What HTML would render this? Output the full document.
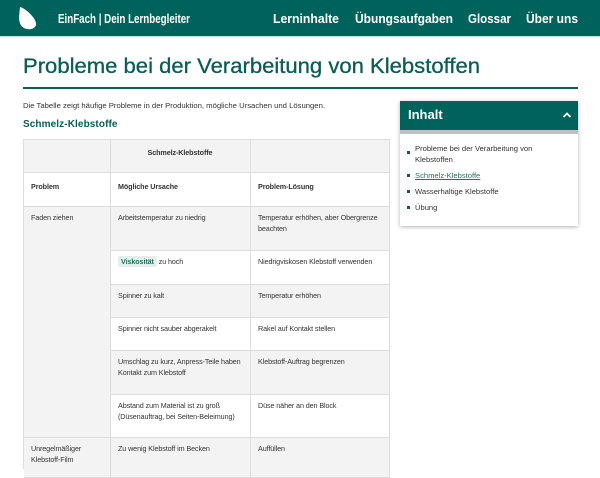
<!DOCTYPE html>
<html><head><meta charset="utf-8"><style>
*{margin:0;padding:0;box-sizing:border-box}
body{width:600px;height:467px;overflow:hidden;background:#fff;font-family:"Liberation Sans",sans-serif;color:#333;position:relative}
.a{position:absolute}
.hdr{left:0;top:0;width:600px;height:37px;background:#00635b;border-bottom:1px solid #bfe5e0}
.c{position:absolute;font-size:7.2px;letter-spacing:-0.1px;line-height:11px;padding:5px 8px 5px 7px;border-right:1px solid #ddd;border-bottom:1px solid #ddd}
.g{background:#f3f3f3}.w{background:#fff}
b{font-weight:bold}
.toc{font-size:7.6px;line-height:11px;color:#333}
</style></head><body>
<div class="a hdr"></div>
<svg class="a" style="left:17px;top:5px" width="22" height="26" viewBox="0 0 22 26"><path d="M3 2 C8 3 18 12 19 18 C20 23 14 25 10 24 C4 23 2 18 2 12 Z" fill="#fff"/></svg>
<svg class="a" style="left:0;top:0" width="600" height="90">
<g fill="#fff" font-family="Liberation Sans" font-weight="bold" font-size="13">
<text x="58" y="23" textLength="132" lengthAdjust="spacingAndGlyphs">EinFach | Dein Lernbegleiter</text>
<text x="273" y="23" textLength="66" lengthAdjust="spacingAndGlyphs">Lerninhalte</text>
<text x="355" y="23" textLength="98" lengthAdjust="spacingAndGlyphs">Übungsaufgaben</text>
<text x="468" y="23" textLength="43" lengthAdjust="spacingAndGlyphs">Glossar</text>
<text x="526" y="23" textLength="52" lengthAdjust="spacingAndGlyphs">Über uns</text>
</g>
<text x="23" y="73" fill="#0b5c55" font-family="Liberation Sans" font-size="21" stroke="#0b5c55" stroke-width="0.3" textLength="457" lengthAdjust="spacingAndGlyphs">Probleme bei der Verarbeitung von Klebstoffen</text>
</svg>
<div class="a" style="left:23px;top:87px;width:555px;height:2px;background:#0b5c55"></div>
<div class="a" style="left:23px;top:101px;font-size:7.7px">Die Tabelle zeigt häufige Probleme in der Produktion, mögliche Ursachen und Lösungen.</div>
<div class="a" style="left:23px;top:119px;font-size:10px;color:#0b5c55;font-weight:bold;letter-spacing:0.1px">Schmelz-Klebstoffe</div>

<div class="a" style="left:23px;top:139px;width:367px;height:330px;border-top:1px solid #ddd;border-left:1px solid #ddd"></div>
<div class="c g" style="left:24px;top:140px;width:87px;height:33px"></div>
<div class="c g" style="left:111px;top:140px;width:140px;height:33px;text-align:center;padding-top:7px"><b>Schmelz-Klebstoffe</b></div>
<div class="c g" style="left:251px;top:140px;width:139px;height:33px"></div>
<div class="c w" style="left:24px;top:173px;width:87px;height:34px;padding-top:8px"><b>Problem</b></div>
<div class="c w" style="left:111px;top:173px;width:140px;height:34px;padding-top:8px"><b>Mögliche Ursache</b></div>
<div class="c w" style="left:251px;top:173px;width:139px;height:34px;padding-top:8px"><b>Problem-Lösung</b></div>

<div class="c g" style="left:24px;top:207px;width:87px;height:231px">Faden ziehen</div>
<div class="c g" style="left:111px;top:207px;width:140px;height:44px">Arbeitstemperatur zu niedrig</div>
<div class="c g" style="left:251px;top:207px;width:139px;height:44px">Temperatur erhöhen, aber Obergrenze beachten</div>
<div class="c w" style="left:111px;top:251px;width:140px;height:34px"><span style="background:#e6eeec;color:#2a6e5f;font-weight:bold;padding:1px 3px;border-radius:2px">Viskosität</span> zu hoch</div>
<div class="c w" style="left:251px;top:251px;width:139px;height:34px">Niedrigviskosen Klebstoff verwenden</div>
<div class="c g" style="left:111px;top:285px;width:140px;height:33px">Spinner zu kalt</div>
<div class="c g" style="left:251px;top:285px;width:139px;height:33px">Temperatur erhöhen</div>
<div class="c w" style="left:111px;top:318px;width:140px;height:33px">Spinner nicht sauber abgerakelt</div>
<div class="c w" style="left:251px;top:318px;width:139px;height:33px">Rakel auf Kontakt stellen</div>
<div class="c g" style="left:111px;top:351px;width:140px;height:44px">Umschlag zu kurz, Anpress-Teile haben Kontakt zum Klebstoff</div>
<div class="c g" style="left:251px;top:351px;width:139px;height:44px">Klebstoff-Auftrag begrenzen</div>
<div class="c w" style="left:111px;top:395px;width:140px;height:43px">Abstand zum Material ist zu groß (Düsenauftrag, bei Seiten-Beleimung)</div>
<div class="c w" style="left:251px;top:395px;width:139px;height:43px">Düse näher an den Block</div>
<div class="c g" style="left:24px;top:438px;width:87px;height:40px">Unregelmäßiger Klebstoff-Film</div>
<div class="c g" style="left:111px;top:438px;width:140px;height:40px">Zu wenig Klebstoff im Becken</div>
<div class="c g" style="left:251px;top:438px;width:139px;height:40px">Auffüllen</div>

<div class="a" style="left:400px;top:101px;width:178px;height:125px;background:#fff;box-shadow:0 1px 4px rgba(0,0,0,.3)"></div>
<div class="a" style="left:400px;top:101px;width:178px;height:29px;background:#00635b"></div>
<div class="a" style="left:400px;top:130px;width:178px;height:4px;background:#b8c4c2"></div>
<div class="a" style="left:408px;top:107px;color:#fff;font-weight:bold;font-size:13px">Inhalt</div>
<svg class="a" style="left:562px;top:111px" width="10" height="8" viewBox="0 0 10 8"><path d="M1.5 6 L5 2.5 L8.5 6" stroke="#fff" stroke-width="1.8" fill="none"/></svg>
<div class="a toc" style="left:407px;top:151px;width:3px;height:3px;background:#0b5c55"></div>
<div class="a toc" style="left:415px;top:143px;width:150px">Probleme bei der Verarbeitung von Klebstoffen</div>
<div class="a toc" style="left:407px;top:174px;width:3px;height:3px;background:#0b5c55"></div>
<div class="a toc" style="left:415px;top:170px;color:#2a6e5f;text-decoration:underline">Schmelz-Klebstoffe</div>
<div class="a toc" style="left:407px;top:190px;width:3px;height:3px;background:#0b5c55"></div>
<div class="a toc" style="left:415px;top:186px">Wasserhaltige Klebstoffe</div>
<div class="a toc" style="left:407px;top:206px;width:3px;height:3px;background:#0b5c55"></div>
<div class="a toc" style="left:415px;top:202px">Übung</div>
</body></html>
